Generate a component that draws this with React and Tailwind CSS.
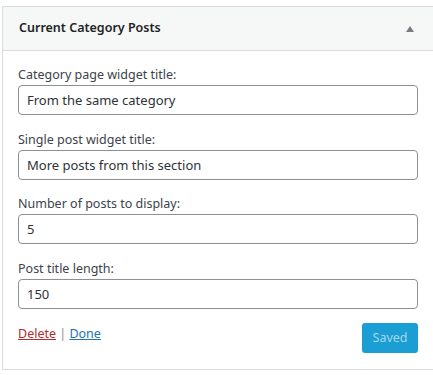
export default function App() {
  const fields = [
    { label: 'Category page widget title:', value: 'From the same category' },
    { label: 'Single post widget title:', value: 'More posts from this section' },
    { label: 'Number of posts to display:', value: '5' },
    { label: 'Post title length:', value: '150' },
  ]

  return (
    <div className="w-[433px] h-[375px] bg-white pt-[6px] pl-[2px] font-['Segoe_UI','Noto_Sans',sans-serif] text-[#3c434a]">
      <div className="w-[440px] border border-[#dcdcde] bg-white">
        <div className="h-[44px] bg-[#f6f7f7] border-b border-[#dcdcde] flex items-center justify-between pl-[16px] pr-[27px]">
          <h3 className="text-[12.5px] font-semibold text-[#1d2327]">Current Category Posts</h3>
          <span className="w-0 h-0 border-l-[4px] border-r-[4px] border-b-[6px] border-l-transparent border-r-transparent border-b-[#787c82]"></span>
        </div>

        <div className="pl-[15px] w-[415px] pt-[14px] pb-[16px]">
          {fields.map(f => (
            <div key={f.label} className="mb-[14.6px]">
              <label className="block text-[12.5px] leading-[20px] text-[#3c434a]">{f.label}</label>
              <input
                type="text"
                defaultValue={f.value}
                className="block w-full h-[30px] px-[8px] border border-[#8c8f94] rounded-[4px] text-[13px] text-[#2c3338] bg-white outline-none"
              />
            </div>
          ))}

          <div className="flex items-start justify-between">
            <div className="text-[12.5px] leading-[20px] pt-[1px]">
              <a href="#" className="text-[#b32d2e] underline">Delete</a>
              <span className="text-[#8c8f94]"> | </span>
              <a href="#" className="text-[#2271b1] underline">Done</a>
            </div>
            <button className="w-[56px] h-[30px] rounded-[3px] bg-[#1b9ed3] text-[#a5d8ee] text-[12.5px]">
              Saved
            </button>
          </div>
        </div>
      </div>
    </div>
  )
}
